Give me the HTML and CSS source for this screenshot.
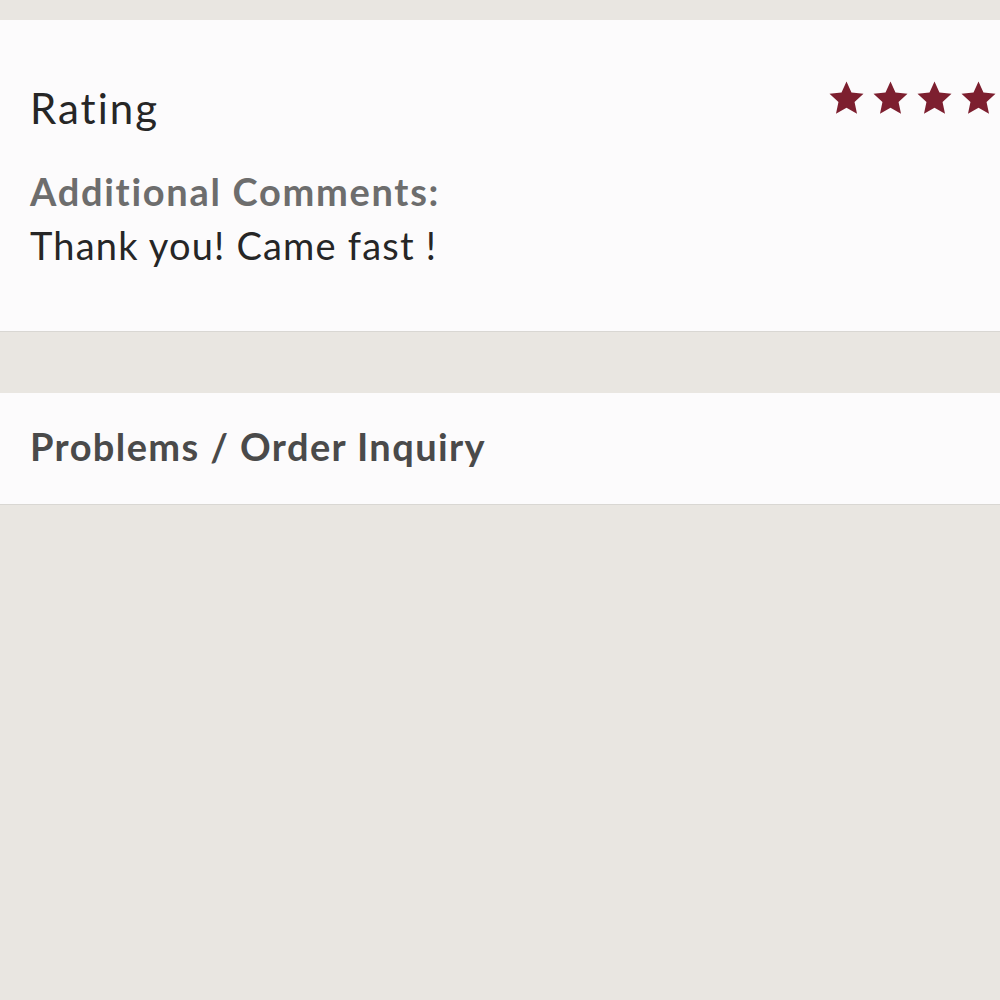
FILE: index.html
```html
<!DOCTYPE html>
<html>
<head>
<meta charset="utf-8">
<link rel="stylesheet" href="styles.css">
</head>
<body>
<div class="page">
  <section class="card review">
    <div class="review-head">
      <h2 class="title">Rating</h2>
      <div class="stars">
        <svg class="star" viewBox="0 0 24 24"><path d="M12 1.5L15.06 8.29 22.46 9.1 16.95 14.11 18.47 21.4 12 17.7 5.53 21.4 7.05 14.11 1.54 9.1 8.94 8.29z"/></svg>
        <svg class="star" viewBox="0 0 24 24"><path d="M12 1.5L15.06 8.29 22.46 9.1 16.95 14.11 18.47 21.4 12 17.7 5.53 21.4 7.05 14.11 1.54 9.1 8.94 8.29z"/></svg>
        <svg class="star" viewBox="0 0 24 24"><path d="M12 1.5L15.06 8.29 22.46 9.1 16.95 14.11 18.47 21.4 12 17.7 5.53 21.4 7.05 14.11 1.54 9.1 8.94 8.29z"/></svg>
        <svg class="star" viewBox="0 0 24 24"><path d="M12 1.5L15.06 8.29 22.46 9.1 16.95 14.11 18.47 21.4 12 17.7 5.53 21.4 7.05 14.11 1.54 9.1 8.94 8.29z"/></svg>
        <svg class="star" viewBox="0 0 24 24"><path d="M12 1.5L15.06 8.29 22.46 9.1 16.95 14.11 18.47 21.4 12 17.7 5.53 21.4 7.05 14.11 1.54 9.1 8.94 8.29z"/></svg>
      </div>
    </div>
    <div class="comments">
      <div class="label">Additional Comments:</div>
      <p class="text">Thank you! Came fast !</p>
    </div>
  </section>
  <section class="card inquiry">
    <h2 class="link">Problems / Order Inquiry</h2>
  </section>
</div>
</body>
</html>
```

FILE: styles.css
```css
html, body {
  margin: 0;
  padding: 0;
  overflow: hidden;
}
body {
  background: #e9e6e1;
  font-family: Lato, "Liberation Sans", sans-serif;
  font-variant-ligatures: none;
  width: 1000px;
  height: 1000px;
}
.page {
  padding-top: 20px;
  display: flex;
  flex-direction: column;
  gap: 61px;
}
.card {
  background: #fcfbfc;
  border-bottom: 1px solid #d9d7d3;
  padding: 0 30px;
}
.review {
  height: 312px;
  box-sizing: border-box;
  padding-top: 60px;
}
.review-head {
  display: flex;
  justify-content: space-between;
  align-items: flex-start;
}
.title {
  margin: 0;
  font-size: 42px;
  font-weight: 400;
  line-height: 56px;
  letter-spacing: 2px;
  color: #262626;
}
.stars {
  display: flex;
  gap: 5px;
  margin-right: -72px;
  margin-top: -1px;
}
.star {
  width: 39px;
  height: 39px;
  fill: #7d1f2f;
}
.comments {
  margin-top: 31px;
}
.label {
  font-size: 38px;
  font-weight: 700;
  line-height: 48px;
  letter-spacing: 1.7px;
  color: #6d6d6d;
}
.text {
  margin: 6px 0 0;
  font-size: 38px;
  line-height: 48px;
  letter-spacing: 1.2px;
  color: #262626;
}
.inquiry {
  height: 112px;
  box-sizing: border-box;
  padding-bottom: 6px;
  display: flex;
  align-items: center;
}
.link {
  margin: 0;
  font-size: 38px;
  font-weight: 700;
  line-height: 48px;
  letter-spacing: 1.4px;
  color: #4a4a4a;
}
```
